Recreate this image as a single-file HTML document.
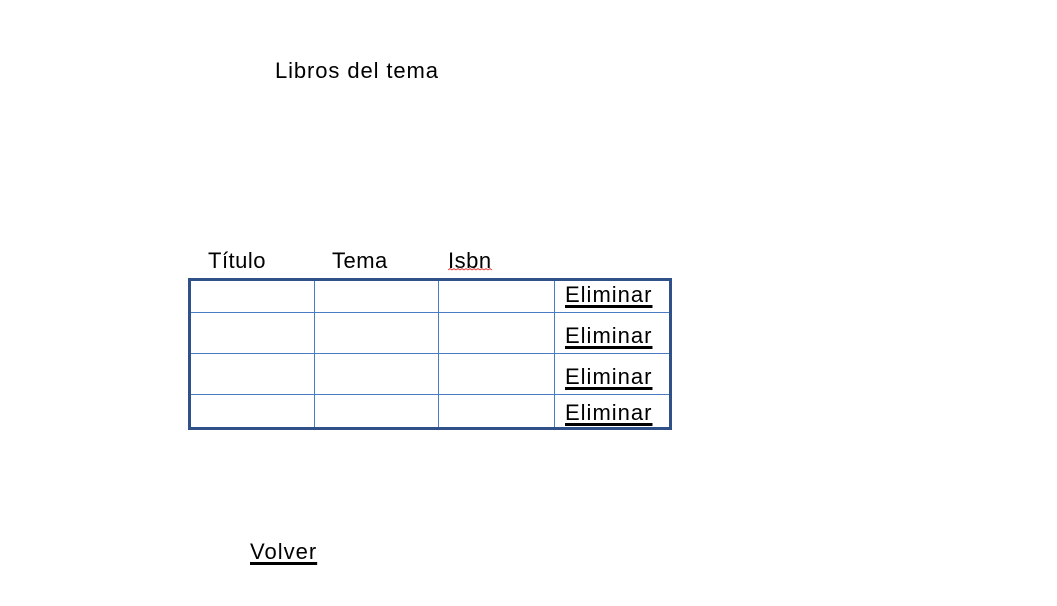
<!DOCTYPE html>
<html><head><meta charset="utf-8"><style>
body{margin:0;width:1057px;height:606px;background:#fff;position:relative;overflow:hidden;font-family:"Liberation Sans",sans-serif;color:#000}
.t{position:absolute;font-size:22px;line-height:1;white-space:nowrap}
.u{text-decoration:underline;text-decoration-thickness:3px;text-underline-offset:3px}
.h{position:absolute;background:#4a7cc6}
</style></head><body>
<div class="t" style="left:275px;top:60px;letter-spacing:0.9px">Libros del tema</div>
<div class="t" style="left:208px;top:250px;letter-spacing:0.5px">Título</div>
<div class="t" style="left:332px;top:250px;letter-spacing:0.5px">Tema</div>
<div class="t" style="left:448px;top:250px;letter-spacing:0.5px">Isbn</div>
<svg style="position:absolute;left:448px;top:268px" width="46" height="4"><path d="M0 2 l2 -1.5 l2 1.5 l2 -1.5 l2 1.5 l2 -1.5 l2 1.5 l2 -1.5 l2 1.5 l2 -1.5 l2 1.5 l2 -1.5 l2 1.5 l2 -1.5 l2 1.5 l2 -1.5 l2 1.5 l2 -1.5 l2 1.5 l2 -1.5 l2 1.5 l2 -1.5 l2 1.5" stroke="#e33" stroke-width="0.8" fill="none"/></svg>
<div style="position:absolute;left:188px;top:278px;width:478px;height:146px;border:3px solid #2f5088;box-sizing:content-box"></div>
<div class="h" style="left:314px;top:281px;width:1px;height:146px"></div>
<div class="h" style="left:438px;top:281px;width:1px;height:146px"></div>
<div class="h" style="left:554px;top:281px;width:1px;height:146px"></div>
<div class="h" style="left:191px;top:312px;width:478px;height:1px"></div>
<div class="h" style="left:191px;top:353px;width:478px;height:1px"></div>
<div class="h" style="left:191px;top:394px;width:478px;height:1px"></div>
<div class="t u" style="left:565px;top:284px;letter-spacing:1px">Eliminar</div>
<div class="t u" style="left:565px;top:325px;letter-spacing:1px">Eliminar</div>
<div class="t u" style="left:565px;top:366px;letter-spacing:1px">Eliminar</div>
<div class="t u" style="left:565px;top:402px;letter-spacing:1px">Eliminar</div>
<div class="t u" style="left:250px;top:541px;letter-spacing:1px">Volver</div>
</body></html>
